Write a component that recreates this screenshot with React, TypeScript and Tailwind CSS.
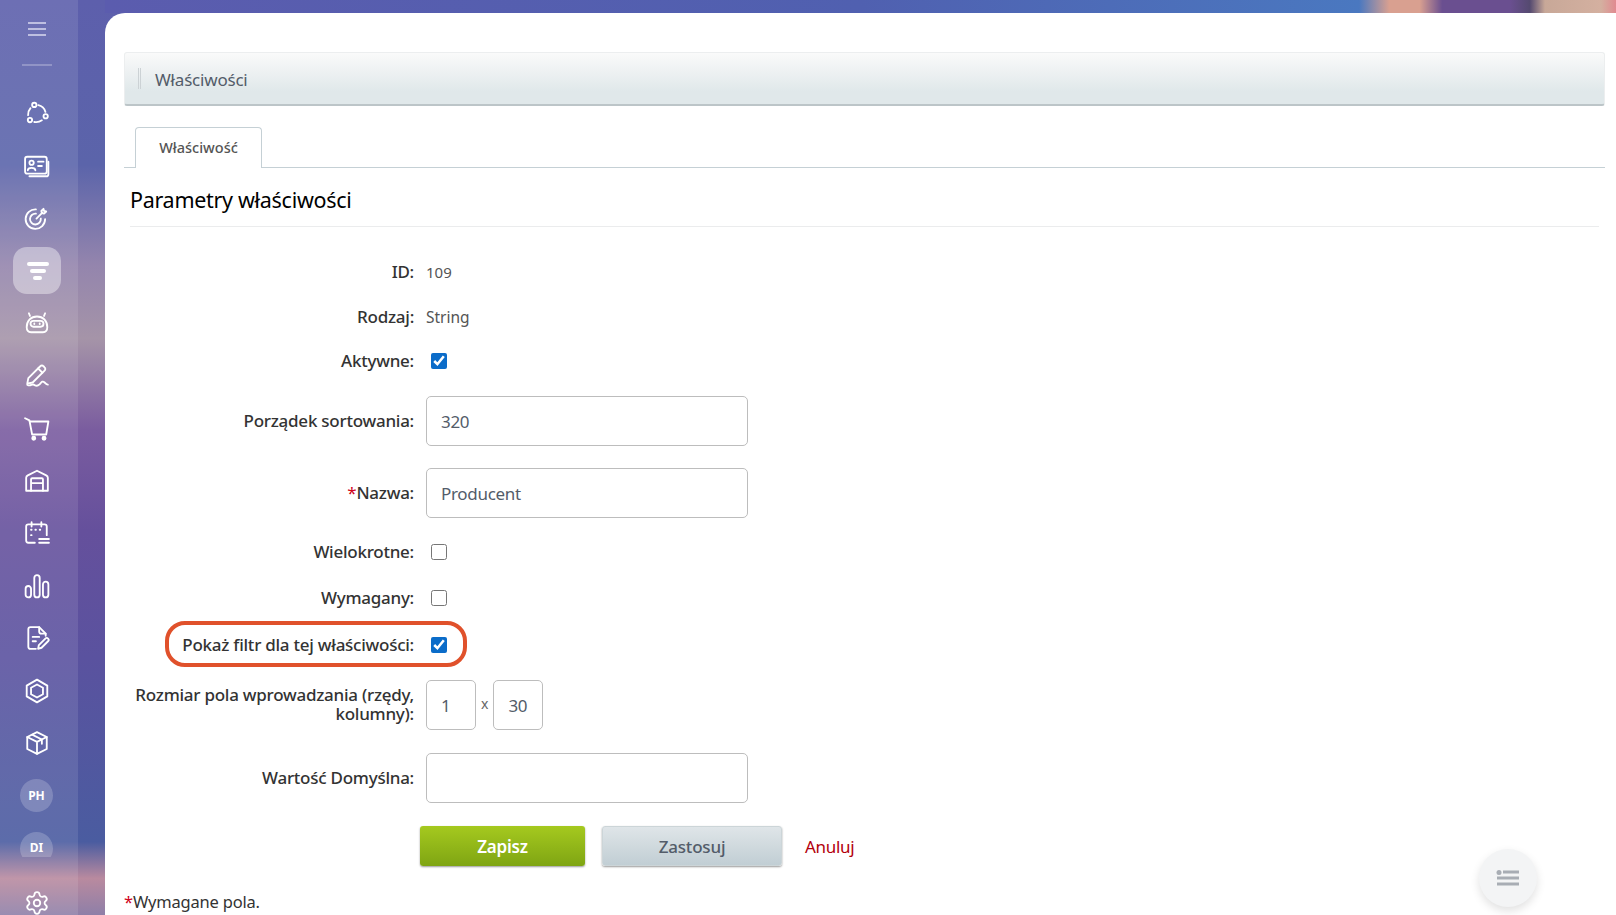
import { ReactNode } from "react";
import { Settings } from "lucide-react";

const font = "font-['Noto_Sans','Open_Sans',sans-serif]";

const NavIcon = ({ children }: { children: ReactNode }) => (
  <div className="h-[52.5px] w-full flex items-center justify-center shrink-0">
    <svg
      width="26"
      height="26"
      viewBox="0 0 24 24"
      fill="none"
      stroke="white"
      strokeWidth="1.7"
      strokeLinecap="round"
      strokeLinejoin="round"
    >
      {children}
    </svg>
  </div>
);

const Avatar = ({ text }: { text: string }) => (
  <div className="h-[52.5px] w-full flex items-center justify-center shrink-0">
    <div className="w-[33px] h-[33px] rounded-full bg-white/20 flex items-center justify-center text-white text-[12px] font-bold">
      {text}
    </div>
  </div>
);

const Sidebar = () => (
  <aside className="w-[78px] h-full shrink-0 bg-white/10 flex flex-col items-center pr-[5px]">
    <div className="h-[58px] w-full shrink-0 flex items-center justify-center">
      <svg width="20" height="16" viewBox="0 0 20 16" stroke="#d9d9f0" strokeWidth="1.4">
        <path d="M1 2h18M1 8h18M1 14h18" />
      </svg>
    </div>
    <div className="mt-[6px] w-[30px] h-[2px] shrink-0 bg-white/25" />
    <div className="mt-[21px] w-full h-[770px] overflow-hidden flex flex-col items-center shrink-0">
      <NavIcon>
        <circle cx="9.500" cy="4.500" r="2" />
        <circle cx="5.500" cy="18.500" r="2" />
        <circle cx="20" cy="15" r="2" />
        <path d="M13.200 4.800A9 9 0 0 1 19.800 11M6 7.500A9 9 0 0 0 3.800 14M9.500 20.300A9 9 0 0 0 16.500 18.800" />
      </NavIcon>
      <NavIcon>
        <rect x="1" y="3.5" width="20" height="15.5" rx="2" />
        <path d="M22.5 8v11.5a2 2 0 0 1-2 2H5" />
        <circle cx="7" cy="9" r="2" />
        <path d="M3.5 16c0-3 7-3 7 0M13 8h5M13 12h3.5" />
      </NavIcon>
      <NavIcon>
        <path d="M19.5 13a9 9 0 1 1-8.5-9M15.5 12.5a5 5 0 1 1-4.5-4.500" />
        <path d="M11.5 12.5 17 7" />
        <path d="M16 5.5 18 3.500l.5 2 2 .5-2 2-2-.5z" />
      </NavIcon>
      <div className="h-[52.5px] w-full flex items-center justify-center shrink-0">
        <div className="w-[48px] h-[47px] rounded-[14px] bg-white/40 flex flex-col items-center justify-center gap-[3px] pl-[2px]">
          <div className="w-[22px] h-[4px] rounded-full bg-white" />
          <div className="w-[16px] h-[4px] rounded-full bg-white" />
          <div className="w-[9px] h-[4px] rounded-full bg-white" />
        </div>
      </div>
      <NavIcon>
        <path d="M5.500 5.500 4.500 3M18.500 5.500l1-2.500" />
        <path d="M2.500 16c0-6 4-10 9.500-10s9.500 4 9.500 10c0 3-1.500 4.500-4 4.500H6.500c-2.500 0-4-1.500-4-4.500z" />
        <rect x="6" y="10" width="12" height="5.500" rx="2.700" />
        <path d="M9.500 12.500v.5M14.500 12.500v.5" />
      </NavIcon>
      <NavIcon>
        <path d="M3 19 4 14 15 3a2 2 0 0 1 3 0l1 1a2 2 0 0 1 0 3L8 18z" />
        <path d="M13 5 17 9" />
        <path d="M3 20c3 2 4-1 6 0s3 2 5 0 3-4 5-2 2 2 3 2" />
      </NavIcon>
      <NavIcon>
        <path d="M1 3l4 2 2.500 13h13L22.500 6H5" />
        <circle cx="9" cy="21.500" r="1.400" fill="white" />
        <circle cx="18.500" cy="21.500" r="1.400" fill="white" />
      </NavIcon>
      <NavIcon>
        <path d="M2 21V9c0-1 .5-1.700 1.500-2.200L12 2.500l8.500 4.300c1 .5 1.500 1.200 1.500 2.200v12z" />
        <path d="M6.500 21v-10.500a1 1 0 0 1 1-1h9a1 1 0 0 1 1 1V21M6.500 14h11" />
      </NavIcon>
      <NavIcon>
        <path d="M10 21H4a2 2 0 0 1-2-2V6a2 2 0 0 1 2-2h15a2 2 0 0 1 2 2v8" />
        <path d="M7 2v4M16 2v4" />
        <path d="M6.500 9h.5M10.500 9h.5M14.500 9h.5M6.500 14h.5" />
        <path d="M14 17.500h9M14 21h9" />
      </NavIcon>
      <NavIcon>
        <rect x="1.500" y="12" width="5" height="10.500" rx="2.500" />
        <rect x="9.500" y="2" width="5" height="20.500" rx="2.500" />
        <rect x="17.500" y="8" width="5" height="14.500" rx="2.500" />
      </NavIcon>
      <NavIcon>
        <path d="M11 22H6a2 2 0 0 1-2-2V4a2 2 0 0 1 2-2h8l6 6v2" />
        <path d="M14 2v4a2 2 0 0 0 2 2h4" />
        <path d="M8 11h6M8 15h3" />
        <path d="M13 22l.7-3.500 6-6a1.700 1.700 0 0 1 2.500 2.500l-6 6z" />
      </NavIcon>
      <NavIcon>
        <path d="M12 1.500 21.500 7v10L12 22.500 2.500 17V7z" />
        <path d="M12 6l5.500 3v6L12 18l-5.500-3V9z" />
      </NavIcon>
      <NavIcon>
        <path d="M12 2 21 6.500v11L12 22l-9-4.500v-11z" />
        <path d="M3 6.500 12 11l9-4.500M12 11v11M7.500 4.300l9 4.500v4" />
      </NavIcon>
      <Avatar text="PH" />
      <Avatar text="DI" />
    </div>
    <div className="w-full shrink-0 flex items-start justify-center pt-[33px]">
      <Settings size={26} color="white" strokeWidth={1.7} />
    </div>
  </aside>
);

const Row = ({
  label,
  className,
  children,
}: {
  label: ReactNode;
  className: string;
  children: ReactNode;
}) => (
  <div className={`relative flex items-center shrink-0 ${className}`}>
    <div className="w-[290px] shrink-0 pb-[2px] text-right text-[17px] tracking-[-0.25px] leading-[19px] font-medium text-[#333]">
      {label}
    </div>
    <div className="ml-[12px] flex items-center">{children}</div>
  </div>
);

const Star = () => <span className="text-[#d0021b] font-normal">*</span>;

const CheckBox = ({ checked }: { checked?: boolean }) => (
  <input
    type="checkbox"
    defaultChecked={checked}
    className="ml-[5px] w-[16px] h-[16px] accent-[#0b6cc9]"
  />
);

const TextInput = ({ value, className }: { value: string; className: string }) => (
  <input
    defaultValue={value}
    className={`h-[50px] rounded-[5px] border border-[#bdbdbd] bg-white px-[14px] text-[17px] tracking-[-0.3px] text-[#535c69] outline-none ${className}`}
  />
);

export default function App() {
  return (
    <div
      className={`${font} relative w-[1616px] h-[915px] overflow-hidden flex bg-[linear-gradient(180deg,#5d5fac_0%,#5b64aa_18%,#9485ad_29%,#a594a8_37%,#7a5c9f_47%,#65509c_58%,#5a529f_72%,#4a5ca0_92%,#b98a9f_96%,#8e7fa8_100%)]`}
    >
      <Sidebar />
      <div className="w-[27px] shrink-0" />
      <div className="flex-1 min-w-0 flex flex-col">
        <div className="h-[13px] shrink-0 bg-[linear-gradient(90deg,#5b5cae_0%,#5060b0_50%,#4a78c0_83%,#d9a090_85%,#d9a090_87%,#6a4f90_88.500%,#6a4f90_93%,#554a70_94.300%,#c8a898_95.300%,#d4b0a0_99%,#e08a90_100%)]" />
        <main className="flex-1 min-h-0 bg-white rounded-tl-[20px] pl-[19px] pr-[11px] pt-[39px] flex flex-col">
          <div className="h-[54px] shrink-0 rounded-[3px] border border-[#eceeef] border-b-[2px] border-b-[#bcc5c8] bg-[linear-gradient(180deg,#fafafa_0%,#e0e8ea_75%)] flex items-center pl-[13px]">
            <div className="w-[3px] h-[21px] border-x border-[#ccd2d5]" />
            <span className="ml-[14px] text-[17px] tracking-[-0.2px] text-[#535c69] mt-[2px]">Właściwości</span>
          </div>
          <div className="mt-[21px] h-[41px] shrink-0 border-b border-[#c5d0d5] pl-[11px] flex">
            <div className="w-[127px] h-[41px] rounded-t-[4px] border border-b-0 border-[#c5d0d5] bg-white flex items-center justify-center text-[14.5px] font-medium text-[#555]">
              Właściwość
            </div>
          </div>
          <h2 className="mt-[16px] ml-[6px] text-[21.5px] tracking-[-0.3px] leading-[32px] font-normal text-black">
            Parametry właściwości
          </h2>
          <div className="mt-[10px] ml-[6px] mr-[6px] h-[1px] shrink-0 bg-[#ebeced]" />
          <Row label="ID:" className="mt-[23px] h-[44px]">
            <span className="text-[15px] text-[#555]">109</span>
          </Row>
          <Row label="Rodzaj:" className="mt-[1px] h-[44px]">
            <span className="text-[15.5px] text-[#555] mt-[2px]">String</span>
          </Row>
          <Row label="Aktywne:" className="h-[44px]">
            <CheckBox checked />
          </Row>
          <Row label="Porządek sortowania:" className="mt-[13px] h-[50px]">
            <TextInput value="320" className="w-[322px]" />
          </Row>
          <Row
            label={
              <>
                <Star />
                Nazwa:
              </>
            }
            className="mt-[22px] h-[50px]"
          >
            <TextInput value="Producent" className="w-[322px]" />
          </Row>
          <Row label="Wielokrotne:" className="mt-[12px] h-[44px]">
            <CheckBox />
          </Row>
          <Row label="Wymagany:" className="mt-[2px] h-[44px]">
            <CheckBox />
          </Row>
          <Row label="Pokaż filtr dla tej właściwości:" className="mt-[3px] h-[44px]">
            <CheckBox checked />
            <div className="absolute left-[41px] top-[-2px] w-[302px] h-[46px] rounded-[20px] border-[4px] border-[#e0512b] pointer-events-none" />
          </Row>
          <Row label="Rozmiar pola wprowadzania (rzędy, kolumny):" className="mt-[13px] h-[50px]">
            <TextInput value="1" className="w-[50px]" />
            <span className="mx-[5px] text-[14px] text-[#666] -mt-[4px]">x</span>
            <TextInput value="30" className="w-[50px]" />
          </Row>
          <Row label="Wartość Domyślna:" className="mt-[23px] h-[50px]">
            <TextInput value="" className="w-[322px]" />
          </Row>
          <div className="mt-[23px] ml-[296px] flex items-center shrink-0">
            <button className="w-[165px] h-[40px] rounded-[3px] pt-[1px] bg-[linear-gradient(180deg,#a5c91f_0%,#7fa513_100%)] shadow-[0_1px_2px_rgba(0,0,0,0.4)] text-white text-[17px] tracking-[-0.2px] font-semibold">
              Zapisz
            </button>
            <button className="ml-[17px] w-[180px] h-[40px] rounded-[3px] pt-[1px] border border-[#ccd5d8] bg-[linear-gradient(180deg,#dfe5e8_0%,#c1ced4_100%)] shadow-[0_1px_2px_rgba(0,0,0,0.4)] text-[#535c69] text-[17px] tracking-[-0.2px] font-medium">
              Zastosuj
            </button>
            <span className="ml-[23px] pt-[1px] text-[17px] tracking-[-0.3px] text-[#b3000c]">Anuluj</span>
          </div>
          <p className="mt-[24px] text-[16.5px] tracking-[-0.2px] leading-[24px] text-[#333]">
            <Star />
            Wymagane pola.
          </p>
        </main>
      </div>
      <button className="absolute right-[79px] bottom-[8px] w-[58px] h-[58px] rounded-full bg-[#f3f4f5] shadow-[0_4px_10px_rgba(0,0,0,0.12)] flex items-center justify-center">
        <svg width="24" height="18" viewBox="0 0 24 18" fill="#a8adb4">
          <circle cx="3" cy="3.500" r="2.500" />
          <rect x="7" y="1.500" width="16" height="3" />
          <rect x="1" y="7.500" width="22" height="3" />
          <rect x="1" y="13.500" width="22" height="3" />
        </svg>
      </button>
    </div>
  );
}
